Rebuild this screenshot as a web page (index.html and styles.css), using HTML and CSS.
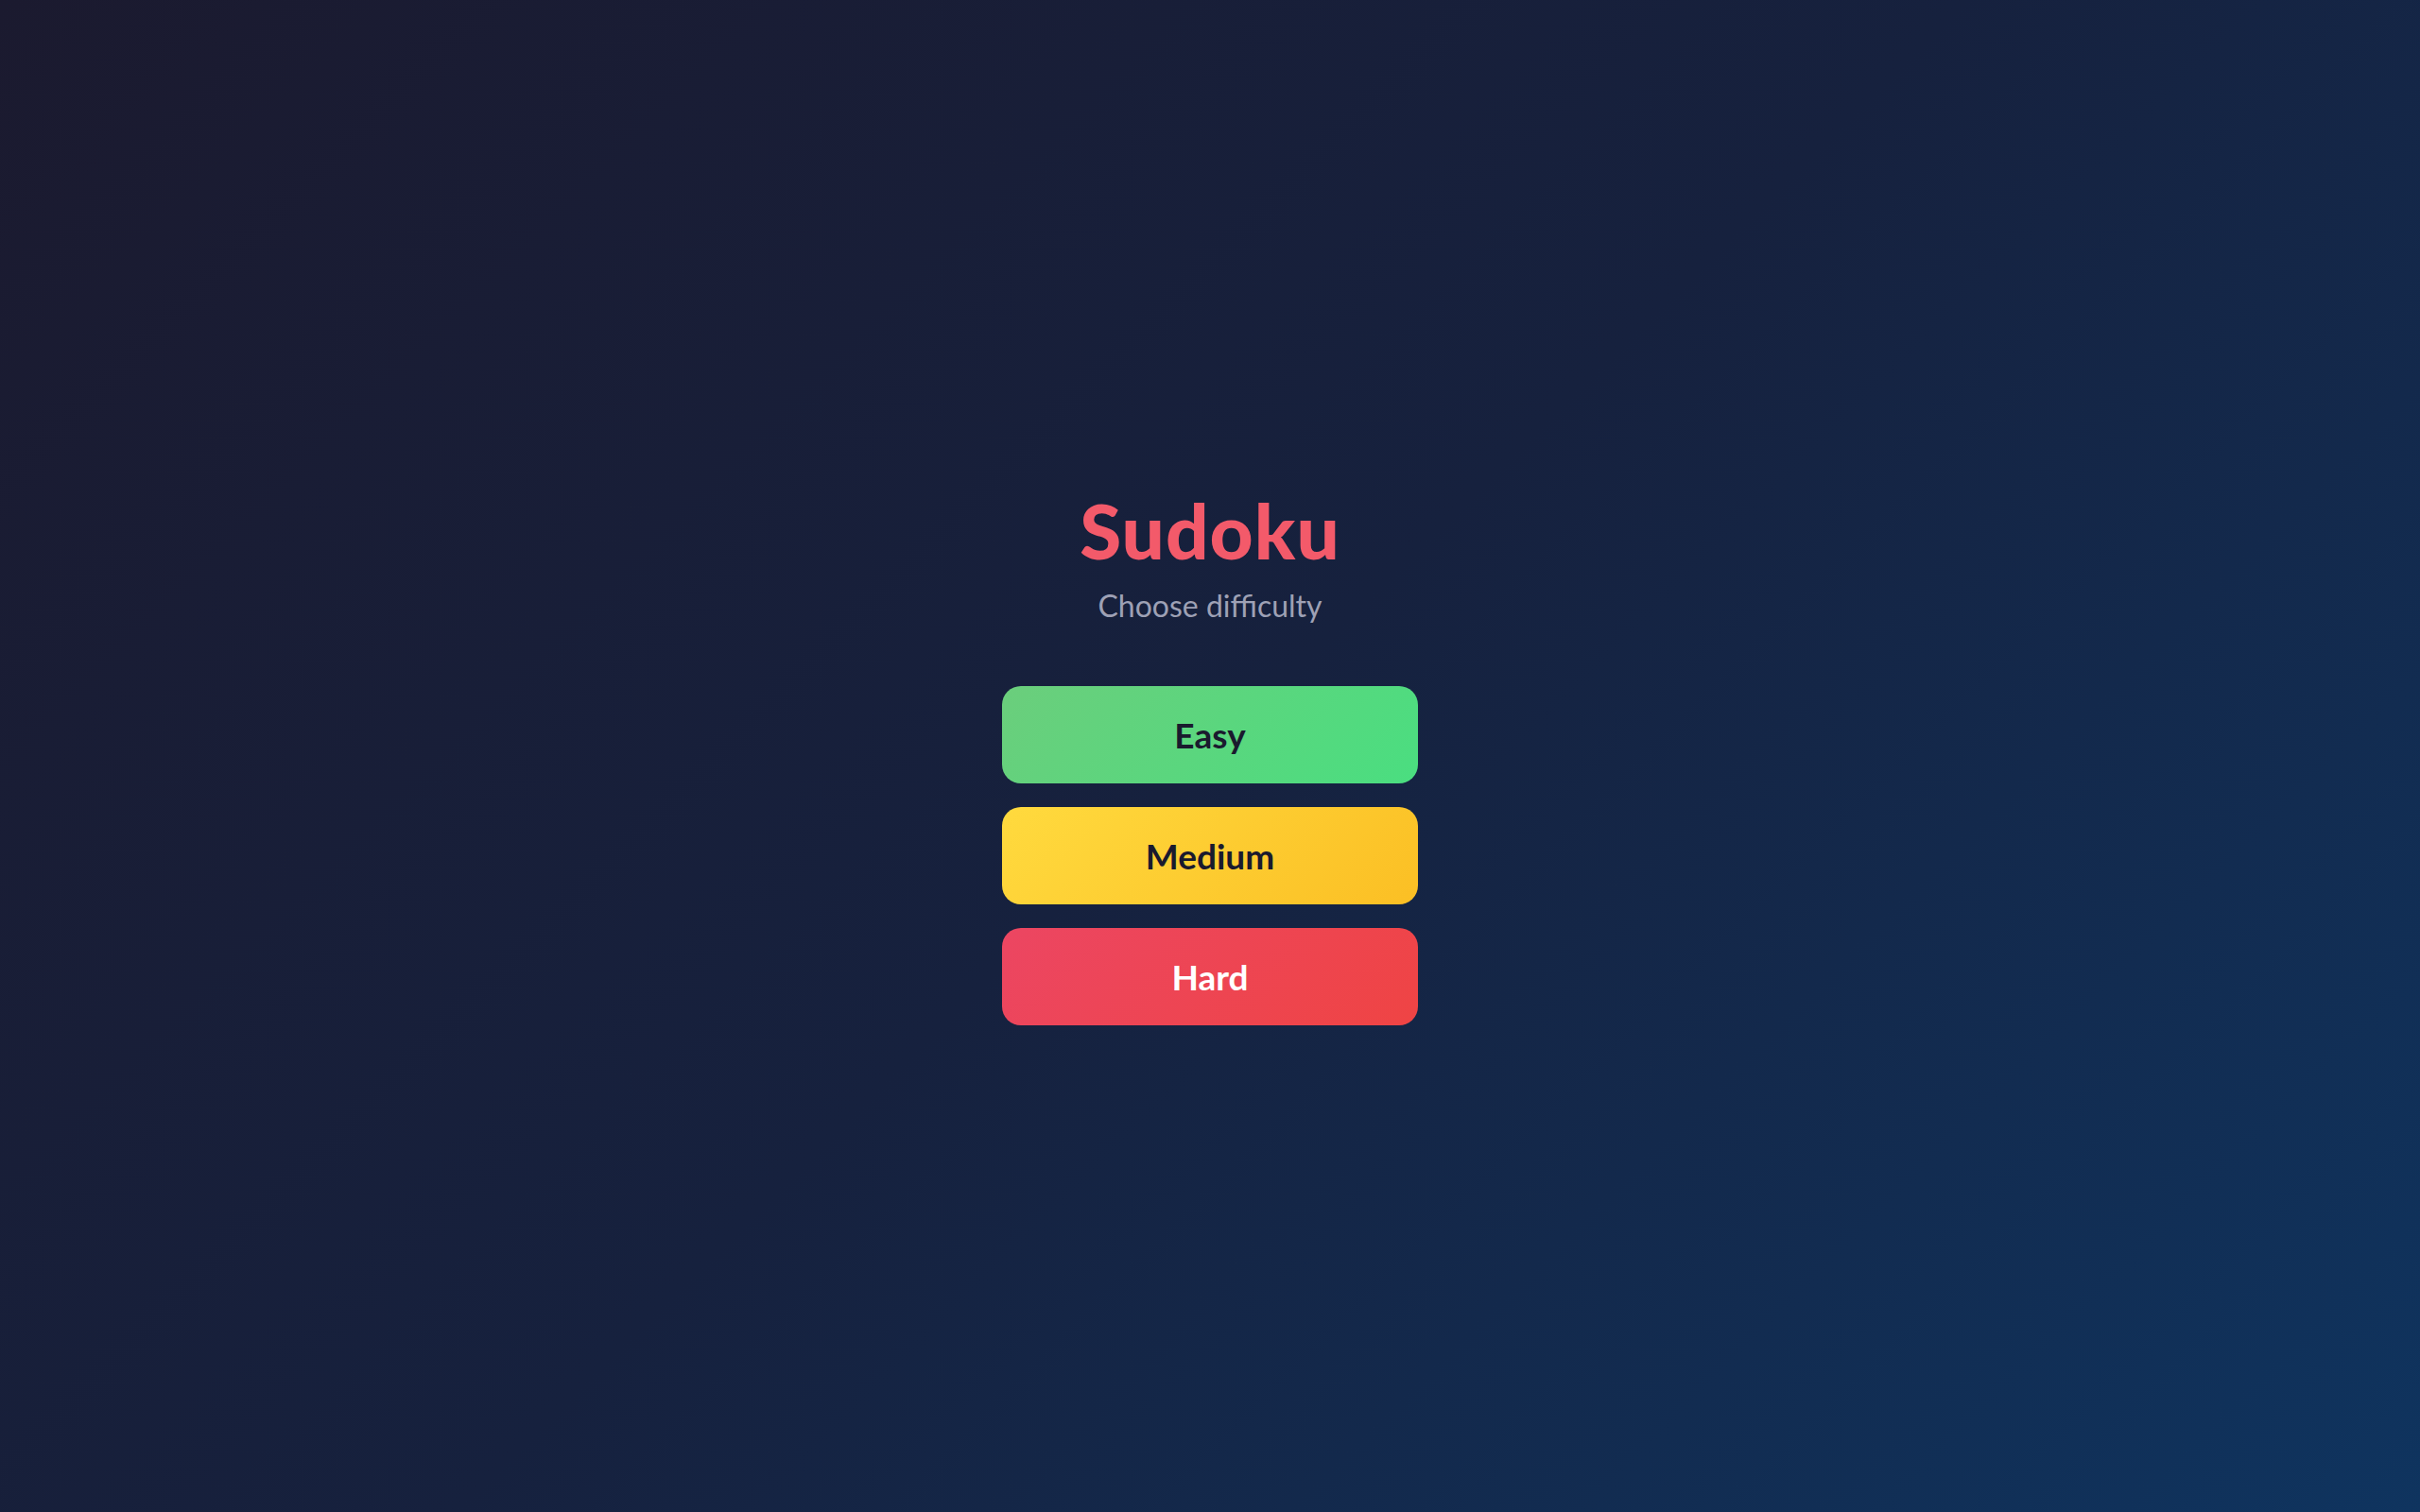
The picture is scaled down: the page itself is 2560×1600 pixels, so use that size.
FILE: index.html
```html
<!DOCTYPE html>
<html lang="en">
<head>
<meta charset="utf-8">
<title>Sudoku</title>
<link rel="stylesheet" href="styles.css">
</head>
<body>
<main class="screen">
  <div class="menu">
    <h1 class="title">Sudoku</h1>
    <p class="subtitle">Choose difficulty</p>
    <div class="buttons">
      <button class="btn btn-easy">Easy</button>
      <button class="btn btn-medium">Medium</button>
      <button class="btn btn-hard">Hard</button>
    </div>
  </div>
</main>
</body>
</html>
```
FILE: styles.css
```css
html, body {
  margin: 0;
  padding: 0;
  height: 100%;
}
body {
  font-family: "Lato", "Noto Sans", sans-serif;
  background: linear-gradient(135deg, #1b1a2f 0%, #16213e 50%, #0f345f 100%);
  color: #fff;
}
.screen {
  height: 100vh;
  box-sizing: border-box;
  padding-top: 6px;
  display: flex;
  align-items: center;
  justify-content: center;
}
.menu {
  display: flex;
  flex-direction: column;
  align-items: center;
}
.title {
  margin: 0;
  font-size: 80px;
  font-weight: 900;
  line-height: 1;
  color: #f35a6a;
  letter-spacing: 1px;
}
.subtitle {
  margin: 21px 0 0;
  font-size: 32px;
  font-weight: 400;
  line-height: 1.2;
  color: #9ea1b5;
}
.buttons {
  margin-top: 66px;
  display: flex;
  flex-direction: column;
  gap: 25px;
}
.btn {
  width: 440px;
  height: 103px;
  border: none;
  border-radius: 20px;
  font-family: inherit;
  font-size: 37px;
  font-weight: 700;
  color: #1a1a2e;
  cursor: pointer;
}
.btn-easy {
  background: linear-gradient(135deg, #6bce7c 0%, #4ade80 100%);
}
.btn-medium {
  background: linear-gradient(135deg, #ffda3e 0%, #fbbf24 100%);
}
.btn-hard {
  background: linear-gradient(135deg, #ec4662 0%, #ef4444 100%);
  color: #fff;
}
```
